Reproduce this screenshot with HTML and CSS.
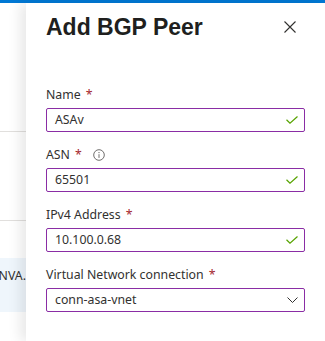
FILE: index.html
```html
<!DOCTYPE html>
<html lang="en">
<head>
  <meta charset="UTF-8">
  <title>Add BGP Peer</title>
  <link rel="stylesheet" href="styles.css">
</head>
<body>
  <div class="topbar"></div>

  <div class="screen">
    <!-- page behind the blade -->
    <div class="behind">
      <div class="behind_row first"></div>
      <div class="behind_row second"></div>
      <div class="behind_row selected"><span>NVA.</span></div>
    </div>

    <!-- Add BGP Peer blade -->
    <aside class="panel">
      <header class="panel_head">
        <h1>Add BGP Peer</h1>
        <button class="close" aria-label="Close">
          <svg width="12" height="12" viewBox="0 0 12 12">
            <path d="M0.5 0.5 L11.5 11.5 M11.5 0.5 L0.5 11.5" stroke="#323130" stroke-width="1.1" fill="none"/>
          </svg>
        </button>
      </header>

      <form class="fields">
        <div class="field">
          <label>Name <span class="req">*</span></label>
          <div class="box">
            <span class="value">ASAv</span>
            <svg class="check" width="12" height="8" viewBox="0 0 12 8">
              <polyline points="0.5,3.8 4,7.2 11.5,0.5" stroke="#57a300" stroke-width="1.2" fill="none"/>
            </svg>
          </div>
        </div>

        <div class="field">
          <label>ASN <span class="req">*</span>
            <svg class="info" width="12" height="12" viewBox="0 0 12 12">
              <circle cx="6" cy="6" r="5.3" stroke="#605e5c" stroke-width="0.9" fill="none"/>
              <circle cx="6" cy="3.6" r="0.65" fill="#605e5c"/>
              <path d="M6 5.2 V8.9" stroke="#605e5c" stroke-width="0.9"/>
            </svg>
          </label>
          <div class="box">
            <span class="value">65501</span>
            <svg class="check" width="12" height="8" viewBox="0 0 12 8">
              <polyline points="0.5,3.8 4,7.2 11.5,0.5" stroke="#57a300" stroke-width="1.2" fill="none"/>
            </svg>
          </div>
        </div>

        <div class="field">
          <label>IPv4 Address <span class="req">*</span></label>
          <div class="box">
            <span class="value">10.100.0.68</span>
            <svg class="check" width="12" height="8" viewBox="0 0 12 8">
              <polyline points="0.5,3.8 4,7.2 11.5,0.5" stroke="#57a300" stroke-width="1.2" fill="none"/>
            </svg>
          </div>
        </div>

        <div class="field">
          <label>Virtual Network connection <span class="req">*</span></label>
          <div class="box">
            <span class="value">conn-asa-vnet</span>
            <svg class="chevron" width="11" height="6" viewBox="0 0 11 6">
              <polyline points="0.5,0.5 5.5,5.5 10.5,0.5" stroke="#323130" stroke-width="1" fill="none"/>
            </svg>
          </div>
        </div>
      </form>
    </aside>
  </div>
</body>
</html>
```

FILE: styles.css
```css
/* Page */
body {
  margin: 0;
  padding: 0;
  height: 341px;
  overflow: hidden;
  background-color: #ffffff;
  font-family: 'Noto Sans', 'Open Sans', sans-serif;
  color: #323130;
}

.topbar {
  height: 3px;
  background-color: #0078d4;
}

.screen {
  display: flex;
  height: 338px;
}

/* Page behind the blade */
.behind {
  width: 26px;
  flex: none;
  display: flex;
  flex-direction: column;
}
.behind_row.first {
  height: 128px;
  border-bottom: 1px solid #e1dfdd;
}
.behind_row.second {
  height: 88px;
  border-bottom: 1px solid #e1dfdd;
}
.behind_row.selected {
  margin-top: 37px;
  height: 54px;
  padding-top: 10px;
  box-sizing: border-box;
  background-color: #eff6fc;
  display: flex;
  justify-content: flex-end;
  overflow: hidden;
  white-space: nowrap;
  font-size: 12.3px;
  line-height: 16px;
}

/* Blade */
.panel {
  flex: 1;
  position: relative;
  background-color: #ffffff;
  box-shadow: -6px 0 12px rgba(0, 0, 0, 0.09);
  padding: 8px 20px 0 20px;
}

.panel_head {
  display: flex;
  justify-content: space-between;
  align-items: center;
  height: 32px;
}
.panel_head h1 {
  margin: 0;
  font-family: 'Liberation Sans', Arial, sans-serif;
  font-size: 23px;
  line-height: 32px;
  font-weight: bold;
  color: #201f1e;
}
.close {
  border: none;
  background: none;
  padding: 0;
  margin-right: 9px;
  width: 12px;
  height: 12px;
  display: flex;
}

.fields {
  margin-top: 42px;
  display: flex;
  flex-direction: column;
  gap: 13px;
}
.field label {
  display: flex;
  align-items: center;
  height: 20px;
  font-size: 12.3px;
  line-height: 20px;
  margin-bottom: 3px;
}
.field .req {
  color: #a4262c;
  margin-left: 5px;
}
.field .info {
  margin-left: 11px;
}
.box {
  height: 24px;
  box-sizing: border-box;
  border: 1px solid #8a2da5;
  border-radius: 2px;
  display: flex;
  align-items: center;
  justify-content: space-between;
  padding: 0 6px 0 8px;
  font-size: 12.3px;
}
.box .value {
  line-height: 20px;
}
```
